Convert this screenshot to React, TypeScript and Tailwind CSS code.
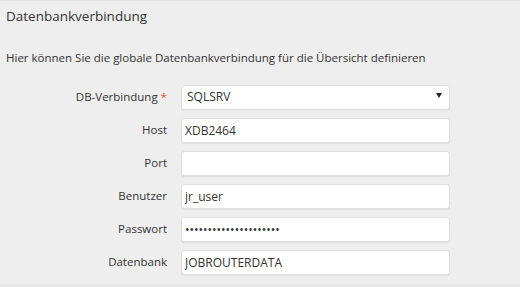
import { useState } from 'react';

const FIELDS = [
  { label: 'Host', value: 'XDB2464', type: 'text' },
  { label: 'Port', value: '', type: 'text' },
  { label: 'Benutzer', value: 'jr_user', type: 'text' },
  { label: 'Passwort', value: 'jobrouterpasswort1234', type: 'password' },
  { label: 'Datenbank', value: 'JOBROUTERDATA', type: 'text' },
];

const inputClass =
  'h-[25px] w-[269px] rounded-[3px] border border-[#e0e0e0] bg-white px-[3px] text-[12px] text-[#333] shadow-[0_1px_1px_rgba(0,0,0,0.06)] outline-none';

export default function App() {
  const [values, setValues] = useState(FIELDS.map((f) => f.value));

  return (
    <div
      className="h-[287px] w-[520px] border-t border-[#e2e2e2] bg-[#eeeeee] text-[#333]"
      style={{ fontFamily: '"Open Sans", "Liberation Sans", sans-serif' }}
    >
      <div className="h-[283px]">
        <h2 className="px-[6px] pt-[4px] text-[13.5px] font-medium leading-[22px] text-[#333]">
          Datenbankverbindung
        </h2>
        <p className="mt-[23px] px-[6px] text-[11.5px] leading-[16px]">
          Hier können Sie die globale Datenbankverbindung für die Übersicht definieren
        </p>

        <div className="mt-[17px] flex flex-col gap-[8px]">
          <div className="flex items-center">
            <label className="w-[168px] pr-[1px] text-right text-[11.5px]">
              DB-Verbindung <span className="text-[#e74c3c]">*</span>
            </label>
            <div className="relative ml-[13px]">
              <select className={inputClass + ' appearance-none pl-[5px]'} defaultValue="SQLSRV">
                <option>SQLSRV</option>
                <option>MYSQL</option>
              </select>
              <span className="pointer-events-none absolute right-[8px] top-[10px] h-0 w-0 border-x-[3.5px] border-t-[5px] border-x-transparent border-t-[#222]" />
            </div>
          </div>

          {FIELDS.map((f, i) => (
            <div key={f.label} className="flex items-center">
              <label className="w-[168px] pr-[1px] text-right text-[11.5px]">{f.label}</label>
              <input
                type={f.type}
                value={values[i]}
                onChange={(e) =>
                  setValues((prev) => prev.map((v, j) => (j === i ? e.target.value : v)))
                }
                className={inputClass + ' ml-[13px]'}
              />
            </div>
          ))}
        </div>
      </div>
      <div className="h-[3px] bg-[#e6e6e6]" />
    </div>
  );
}
